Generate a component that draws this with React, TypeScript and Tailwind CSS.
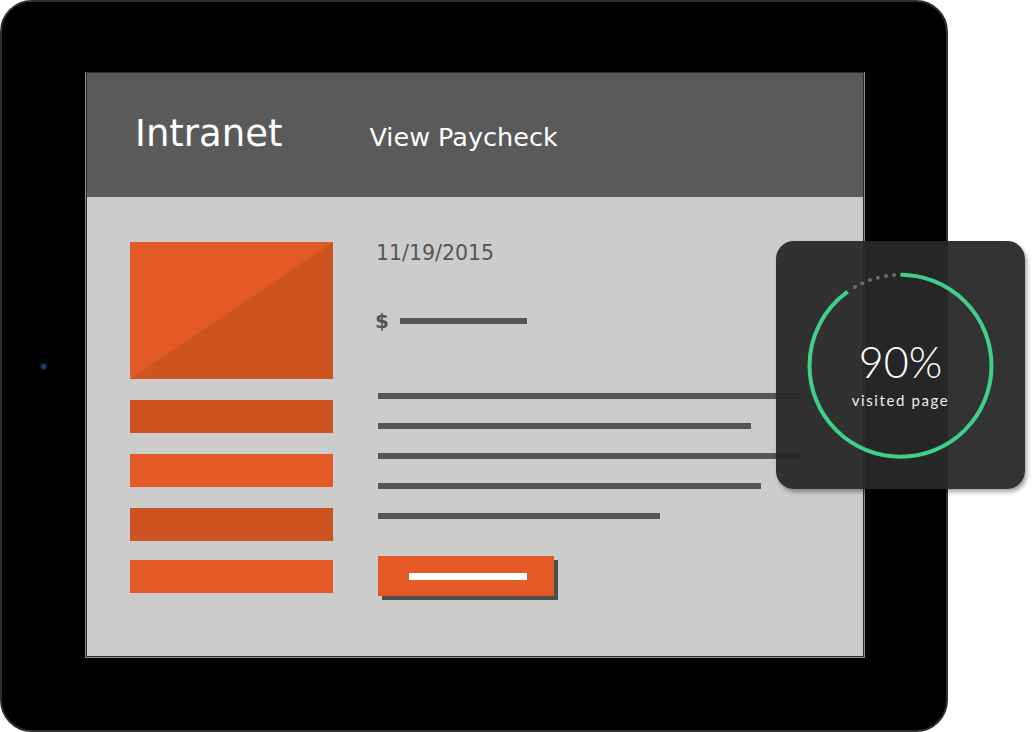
import React from "react";

const CX = 124.5;
const CY = 124.8;
const R = 91;
const C = 2 * Math.PI * R;

function Ring() {
  const dots = [-30, -24.8, -19.6, -14.4, -9.2, -4].map((deg) => {
    const a = (deg * Math.PI) / 180;
    return { x: CX + R * Math.sin(a), y: CY - R * Math.cos(a) };
  });
  return (
    <svg width="249" height="248" viewBox="0 0 249 248" className="absolute left-0 top-0">
      <circle
        cx={CX}
        cy={CY}
        r={R}
        fill="none"
        stroke="#3fd08b"
        strokeWidth="4"
        strokeDasharray={`${C * 0.9} ${C}`}
        transform={`rotate(-90 ${CX} ${CY})`}
      />
      {dots.map((d, i) => (
        <circle key={i} cx={d.x} cy={d.y} r="2" fill="#6b6b6b" />
      ))}
    </svg>
  );
}

export default function App() {
  const dv = { fontFamily: '"DejaVu Sans", Verdana, sans-serif' };
  return (
    <div className="relative w-[1032px] h-[732px] bg-white overflow-hidden">
      {/* Tablet */}
      <div className="flex w-[948px] h-[732px] rounded-[32px] bg-black border-2 border-[#2e2e2e]">
        <div className="w-[83px] flex items-center justify-center">
          <div className="w-[5px] h-[5px] rounded-full bg-[#1d3f7c] shadow-[0_0_3px_1px_rgba(40,80,160,0.35)]" />
        </div>
        <div className="mt-[70px] w-[780px] h-[586px] border-l border-r border-b border-[#8a8a8a]">
          <div className="w-full h-full border border-[#2c2c2c] flex flex-col" style={dv}>
            {/* Header */}
            <div className="h-[124px] bg-[#5a5a5a] flex items-center pl-[48px] shrink-0">
              <span className="text-white text-[37px] leading-[36px] mb-[2px]">Intranet</span>
              <span className="text-white text-[25.5px] leading-[30px] ml-[87px] mt-[4px]">View Paycheck</span>
            </div>
            {/* Body */}
            <div className="flex-1 bg-[#cccccc] flex pl-[43px] pt-[45px]">
              <div className="w-[203px] flex flex-col">
                <div className="relative w-[203px] h-[137px] bg-[#e35a27]">
                  <svg width="203" height="137" className="absolute left-0 top-0">
                    <polygon points="203,0 203,137 0,137" fill="#cd5420" />
                  </svg>
                </div>
                <div className="h-[33px] bg-[#cd5420] mt-[21px]" />
                <div className="h-[33px] bg-[#e35a27] mt-[21px]" />
                <div className="h-[33px] bg-[#cd5420] mt-[21px]" />
                <div className="h-[33px] bg-[#e35a27] mt-[19px]" />
              </div>
              <div className="ml-[42px] flex flex-col">
                <div className="text-[20.5px] leading-[24px] text-[#555555] mt-[-1px] ml-[1px]">11/19/2015</div>
                <div className="flex items-center mt-[44px] h-[24px]">
                  <span className="text-[20px] leading-[24px] font-bold text-[#555555]">$</span>
                  <div className="ml-[11px] w-[127px] h-[6px] bg-[#555555]" />
                </div>
                <div className="ml-[3px] mt-[60px] flex flex-col gap-[24px]">
                  <div className="w-[422px] h-[6px] bg-[#555555]" />
                  <div className="w-[373px] h-[6px] bg-[#555555]" />
                  <div className="w-[422px] h-[6px] bg-[#555555]" />
                  <div className="w-[383px] h-[6px] bg-[#555555]" />
                  <div className="w-[282px] h-[6px] bg-[#555555]" />
                </div>
                <div className="ml-[3px] mt-[37px] w-[176px] h-[40px] bg-[#e35a27] shadow-[4px_4px_0_#4e4e4e] flex items-center justify-center">
                  <div className="w-[118px] h-[7px] bg-white ml-[4px]" />
                </div>
              </div>
            </div>
          </div>
        </div>
      </div>

      {/* Overlay card */}
      <div className="absolute left-[776px] top-[241px] w-[249px] h-[248px] rounded-[18px] bg-[rgba(40,40,40,0.95)] shadow-[2px_3px_4px_rgba(0,0,0,0.35)]">
        <Ring />
        <div className="absolute inset-0 flex flex-col items-center" style={{ fontFamily: 'Lato, "Open Sans", sans-serif' }}>
          <div className="mt-[95px] text-[43px] leading-[52px] font-light text-white">90%</div>
          <div className="mt-[3px] text-[15px] leading-[18px] tracking-[1.6px] text-[#eeeeee]">visited page</div>
        </div>
      </div>
    </div>
  );
}
